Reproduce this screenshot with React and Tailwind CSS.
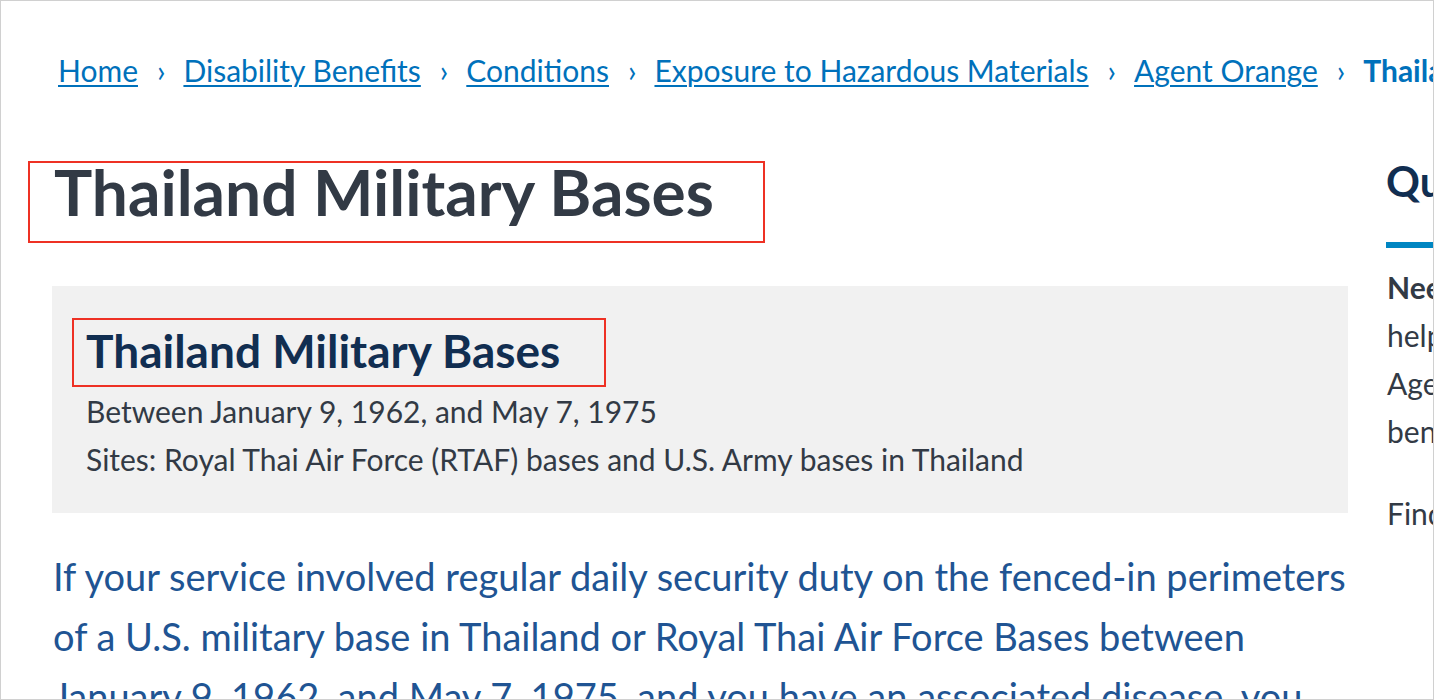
import React from 'react';

const crumbs = ['Home', 'Disability Benefits', 'Conditions', 'Exposure to Hazardous Materials', 'Agent Orange'];

const Sep = () => <span className="ml-[19px] mr-[18px] text-[#0071bb] no-underline">›</span>;

const App = () => {
  return (
    <div className="w-[1434px] h-[700px] overflow-hidden border border-[#d0d0d0] bg-white font-['Lato',sans-serif]">
      {/* Breadcrumb */}
      <nav className="pt-[49px] pl-[57px] text-[30px] leading-[40px] whitespace-nowrap text-[#0071bb]">
        {crumbs.map((c) => (
          <React.Fragment key={c}>
            <a href="#" className="underline decoration-2 underline-offset-[3px]">{c}</a>
            <Sep />
          </React.Fragment>
        ))}
        <span className="font-bold">Thailand Military Bases</span>
      </nav>

      <div className="flex gap-[38px] pl-[51px] mt-[71px]">
        {/* Main column */}
        <main className="w-[1296px] shrink-0">
          <div className="-ml-[24px] w-[737px] h-[82px] border-2 border-[#ee3124] pl-[24px]">
            <h1 className="text-[64px] leading-[58px] font-bold text-[#323a45] whitespace-nowrap">Thailand Military Bases</h1>
          </div>

          <div className="mt-[43px] bg-[#f1f1f1] pt-[32px] pl-[20px] pb-[30px]">
            <div className="w-[534px] h-[69px] border-2 border-[#ee3124] pl-[12px] pt-[6px]">
              <h2 className="text-[46px] leading-[50px] font-bold text-[#112e51] whitespace-nowrap">Thailand Military Bases</h2>
            </div>
            <div className="ml-[14px] text-[30px] leading-[48px] text-[#323a45] whitespace-nowrap">
              <p>Between January 9, 1962, and May 7, 1975</p>
              <p>Sites: Royal Thai Air Force (RTAF) bases and U.S. Army bases in Thailand</p>
            </div>
          </div>

          <p className="mt-[33px] ml-[1px] text-[38px] leading-[60px] text-[#205493] whitespace-nowrap">
            If your service involved regular daily security duty on the fenced-in perimeters
            <br />
            of a U.S. military base in Thailand or Royal Thai Air Force Bases between
            <br />
            January 9, 1962, and May 7, 1975, and you have an associated disease, you
          </p>
        </main>

        {/* Sidebar */}
        <aside className="w-[300px] shrink-0 text-[#323a45]">
          <h2 className="text-[42px] leading-[40px] font-bold text-[#112e51] whitespace-nowrap">Quick links</h2>
          <div className="mt-[41px] h-[6px] bg-[#0086c2]"></div>
          <p className="mt-[15px] pl-[1px] text-[30px] leading-[48px] whitespace-nowrap">
            <strong>Need help?</strong> A Veterans Service
            <br />
            help you file a claim for
            <br />
            Agent Orange-related
            <br />
            benefits.
          </p>
          <p className="mt-[34px] pl-[1px] text-[30px] leading-[48px] whitespace-nowrap">Find a VA location</p>
        </aside>
      </div>
    </div>
  );
};

export default App;
